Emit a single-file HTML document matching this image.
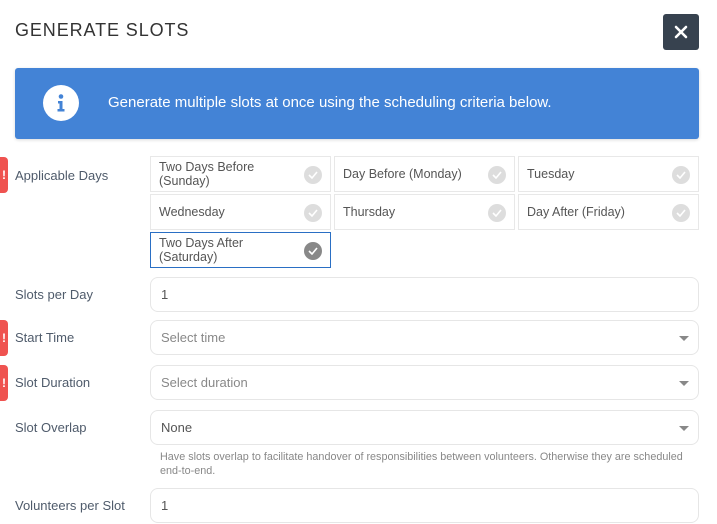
<!DOCTYPE html>
<html><head><meta charset="utf-8"><style>
*{box-sizing:border-box;margin:0;padding:0}
body{width:717px;height:524px;background:#fff;font-family:"Liberation Sans",sans-serif;position:relative;overflow:hidden;color:#555}
.abs{position:absolute}
.title{left:15px;top:20px;font-size:18px;letter-spacing:0.9px;color:#333}
.close{left:663px;top:14px;width:36px;height:36px;background:#37424f;border-radius:3px}
.banner{left:15px;top:68px;width:684px;height:71px;background:#4383d6;border-radius:3px;box-shadow:0 1px 3px rgba(0,0,0,.15)}
.banner .t{position:absolute;left:93px;top:26px;color:#fff;font-size:15px}
.ic{position:absolute;left:28px;top:17px;width:36px;height:36px;border-radius:50%;background:#fff}
.lbl{left:15px;font-size:13px;color:#4f5b6b}
.err{left:0;width:8px;height:36px;background:#ef5350;border-radius:0 4px 4px 0;color:#fff;font-size:12px;font-weight:bold;text-align:center;line-height:36px}
.day{width:181px;height:36px;border:1px solid #e8e8e8;font-size:12.5px;color:#555;padding-left:8px;display:flex;align-items:center;line-height:14px}
.day.sel{border-color:#2a6fc4}
.chk{position:absolute;right:8px;top:9px;width:18px;height:18px;border-radius:50%;background:#ddd}
.day.sel .chk{background:#888}
.chk svg{position:absolute;left:4px;top:5px}
.inp{left:150px;width:549px;height:35px;border:1px solid #e6e6e6;border-radius:8px;font-size:13px;color:#555;padding-left:10px;line-height:33px}
.ph{color:#888}
.arr{position:absolute;right:9px;top:15px;width:0;height:0;border-left:5px solid transparent;border-right:5px solid transparent;border-top:5px solid #888}
.help{left:160px;top:450px;width:550px;font-size:10.8px;color:#888;line-height:14px;white-space:nowrap}
</style></head><body>
<div class="abs title">GENERATE SLOTS</div>
<div class="abs close"><svg width="36" height="36"><path d="M13 13L23 23M23 13L13 23" stroke="#fff" stroke-width="2.6" stroke-linecap="round"/></svg></div>
<div class="abs banner"><div class="ic"><svg width="36" height="36"><circle cx="18" cy="11.5" r="2.3" fill="#4383d6"/><path d="M15 16h4.5v8h2v2.5h-7V24h2v-5.5H15z" fill="#4383d6"/></svg></div><div class="t">Generate multiple slots at once using the scheduling criteria below.</div></div>

<div class="abs err" style="top:157px">!</div>
<div class="abs lbl" style="top:168px">Applicable Days</div>

<div class="abs day" style="left:150px;top:156px">Two Days Before<br>(Sunday)<span class="chk"><svg width="10" height="8"><path d="M1 4l3 3 5-6" stroke="#fff" stroke-width="1.6" fill="none"/></svg></span></div>
<div class="abs day" style="left:334px;top:156px">Day Before (Monday)<span class="chk"><svg width="10" height="8"><path d="M1 4l3 3 5-6" stroke="#fff" stroke-width="1.6" fill="none"/></svg></span></div>
<div class="abs day" style="left:518px;top:156px">Tuesday<span class="chk"><svg width="10" height="8"><path d="M1 4l3 3 5-6" stroke="#fff" stroke-width="1.6" fill="none"/></svg></span></div>
<div class="abs day" style="left:150px;top:194px">Wednesday<span class="chk"><svg width="10" height="8"><path d="M1 4l3 3 5-6" stroke="#fff" stroke-width="1.6" fill="none"/></svg></span></div>
<div class="abs day" style="left:334px;top:194px">Thursday<span class="chk"><svg width="10" height="8"><path d="M1 4l3 3 5-6" stroke="#fff" stroke-width="1.6" fill="none"/></svg></span></div>
<div class="abs day" style="left:518px;top:194px">Day After (Friday)<span class="chk"><svg width="10" height="8"><path d="M1 4l3 3 5-6" stroke="#fff" stroke-width="1.6" fill="none"/></svg></span></div>
<div class="abs day sel" style="left:150px;top:232px">Two Days After<br>(Saturday)<span class="chk"><svg width="10" height="8"><path d="M1 4l3 3 5-6" stroke="#fff" stroke-width="1.6" fill="none"/></svg></span></div>

<div class="abs lbl" style="top:287px">Slots per Day</div>
<div class="abs inp" style="top:277px">1</div>

<div class="abs err" style="top:320px">!</div>
<div class="abs lbl" style="top:330px">Start Time</div>
<div class="abs inp ph" style="top:320px">Select time<span class="arr"></span></div>

<div class="abs err" style="top:365px">!</div>
<div class="abs lbl" style="top:375px">Slot Duration</div>
<div class="abs inp ph" style="top:365px">Select duration<span class="arr"></span></div>

<div class="abs lbl" style="top:420px">Slot Overlap</div>
<div class="abs inp" style="top:410px">None<span class="arr"></span></div>
<div class="abs help">Have slots overlap to facilitate handover of responsibilities between volunteers. Otherwise they are scheduled<br>end-to-end.</div>

<div class="abs lbl" style="top:498px">Volunteers per Slot</div>
<div class="abs inp" style="top:488px">1</div>
</body></html>
